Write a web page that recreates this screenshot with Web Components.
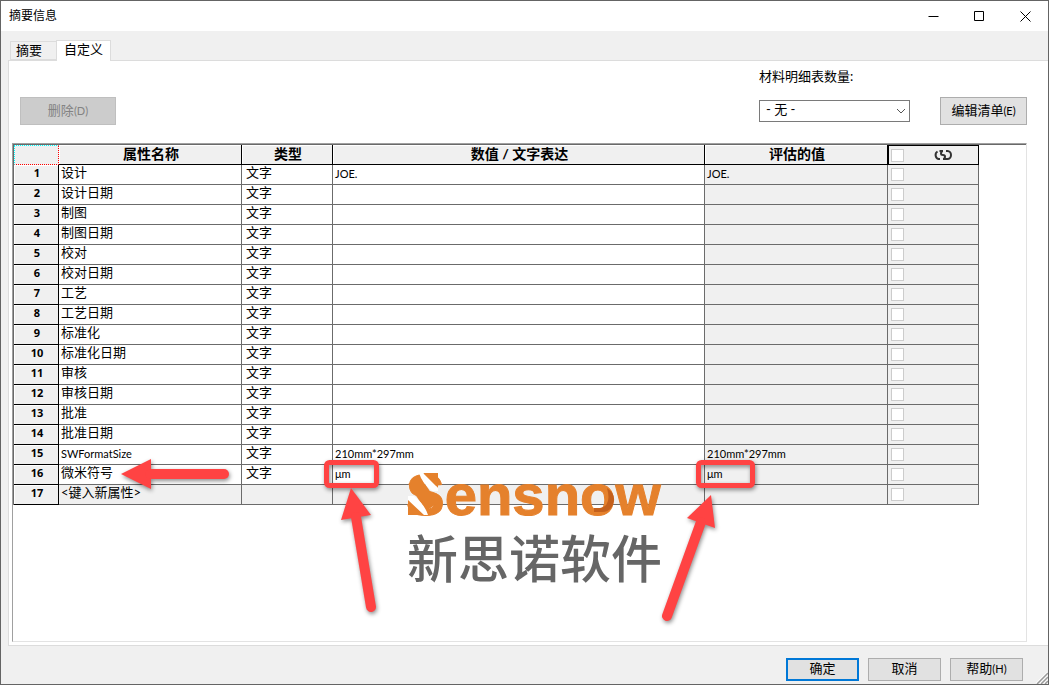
<!DOCTYPE html>
<html lang="zh-CN">
<head>
<meta charset="utf-8">
<title>摘要信息</title>
<style>
    html, body {
        margin: 0;
        height: 100%;
    }
    body {
        font-family: Lato, 'Noto Sans CJK SC', sans-serif;
        font-size: 13px;
        line-height: 20px;
        color: #000;
    }
</style>
</head>
<body>
<summary-dialog>
    <title-bar slot="title">摘要信息</title-bar>
    <tab-strip slot="tabs"></tab-strip>
    <tool-row slot="tools"></tool-row>
    <property-grid slot="grid"></property-grid>
    <push-button slot="footer" primary>确定</push-button>
    <push-button slot="footer">取消</push-button>
    <push-button slot="footer" key="H">帮助</push-button>
</summary-dialog>

<script>
class SummaryDialog extends HTMLElement {
    constructor() {
        super();
        this.attachShadow({ mode: 'open' });
        this.shadowRoot.innerHTML = `
        <style>
            :host {
                display: flex;
                flex-direction: column;
                box-sizing: border-box;
                min-height: 100%;
                border: 1px solid #646464;
                background: #f0f0f0;
            }
            .tabs {
                padding: 9px 0 0 9px;
            }
            .panel {
                flex: 1;
                display: flex;
                flex-direction: column;
                margin-left: 7px;
                padding: 5px 21px 3px 3px;
                border: 1px solid #dcdcdc;
                border-right: none;
                background: #fff;
            }
            .grid {
                flex: 1;
                display: flex;
                flex-direction: column;
            }
            footer {
                position: relative;
                display: flex;
                justify-content: flex-end;
                gap: 9px;
                padding: 12px 25px 3px;
            }
            .grip {
                position: absolute;
                right: 0;
                bottom: 0;
            }
        </style>
        <slot name="title"></slot>
        <div class="tabs"><slot name="tabs"></slot></div>
        <main class="panel">
            <slot name="tools"></slot>
            <div class="grid"><slot name="grid"></slot></div>
        </main>
        <footer>
            <slot name="footer"></slot>
            <svg class="grip" width="12" height="12" viewBox="0 0 12 12" stroke-width="1.5">
                <path stroke="#fff" d="M0 11.500L12 0M4 11.500L12 4M8 11.500L12 8"/>
                <path stroke="#9a9a9a" d="M1 12L12 1M5 12L12 5M9 12L12 9"/>
            </svg>
        </footer>
        `;
    }
}

class TitleBar extends HTMLElement {
    constructor() {
        super();
        this.attachShadow({ mode: 'open' });
        this.shadowRoot.innerHTML = `
        <style>
            :host {
                display: flex;
                align-items: center;
                justify-content: space-between;
                height: 30px;
                padding-left: 8px;
                background: #fff;
                font-size: 12px;
            }
            .buttons {
                display: flex;
            }
            button {
                display: flex;
                align-items: center;
                justify-content: center;
                width: 46px;
                height: 28px;
                padding: 0;
                border: none;
                background: none;
            }
            svg {
                fill: none;
                stroke: #000;
            }
        </style>
        <slot></slot>
        <div class="buttons">
            <button aria-label="最小化"><svg width="11" height="11"><path d="M.5 5.500h10"/></svg></button>
            <button aria-label="最大化"><svg width="11" height="11"><path d="M.5.5h9v9h-9z"/></svg></button>
            <button aria-label="关闭"><svg width="11" height="11"><path d="M.5.5l10 10M10.500.5l-10 10"/></svg></button>
        </div>
        `;
    }
}

class TabStrip extends HTMLElement {
    constructor() {
        super();
        this.attachShadow({ mode: 'open' });
        this.shadowRoot.innerHTML = `
        <style>
            :host {
                display: flex;
                align-items: flex-end;
                margin-bottom: -1px;
            }
            button {
                box-sizing: border-box;
                height: 19px;
                padding: 0 14px 0 5px;
                border: 1px solid #dcdcdc;
                border-right: none;
                background: #f0f0f0;
                font: inherit;
                line-height: 17px;
                margin-bottom: 1px;
            }
            button[aria-selected=true] {
                height: 21px;
                margin-bottom: 0;
                padding: 0 7px 4px;
                border-right: 1px solid #dcdcdc;
                border-bottom: none;
                background: #fff;
                position: relative;
            }
        </style>
        <button role="tab" aria-selected="false">摘要</button>
        <button role="tab" aria-selected="true">自定义</button>
        `;
        this.setAttribute('role', 'tablist');
    }
}

class PushButton extends HTMLElement {
    constructor() {
        super();
        this.attachShadow({ mode: 'open' });
    }
    connectedCallback() {
        const key = this.getAttribute('key');
        this.shadowRoot.innerHTML = `
        <style>
            :host {
                display: block;
                width: 73px;
                height: 23px;
            }
            :host([size=delete]) {
                width: 96px;
                height: 28px;
            }
            :host([size=edit]) {
                width: 87px;
                height: 28px;
            }
            button {
                width: 100%;
                height: 100%;
                padding: 0 0 2px;
                border: 1px solid #adadad;
                background: #e1e1e1;
                color: #000;
                font: inherit;
                line-height: 17px;
            }
            button:disabled {
                border-color: #bfbfbf;
                background: #ccc;
                color: #838383;
            }
            :host([primary]) button {
                border: 2px solid #0078d7;
            }
            small {
                font-size: 11px;
            }
        </style>
        <button ${this.hasAttribute('disabled') ? 'disabled' : ''}><slot></slot>${key ? `<small>(${key})</small>` : ''}</button>
        `;
    }
}

class ToolRow extends HTMLElement {
    constructor() {
        super();
        this.attachShadow({ mode: 'open' });
        this.shadowRoot.innerHTML = `
        <style>
            :host {
                display: flex;
                align-items: flex-end;
                padding: 0 0 18px 8px;
            }
            .bom {
                display: flex;
                flex-direction: column;
                gap: 14px;
                margin: 0 30px 3px auto;
            }
            .pick {
                display: grid;
                grid-template-rows: 22px;
                align-items: center;
                width: 151px;
            }
            .pick > * {
                grid-area: 1 / 1;
            }
            select {
                box-sizing: border-box;
                width: 100%;
                height: 22px;
                padding: 0 0 3px 6px;
                border: 1px solid #7a7a7a;
                border-radius: 0;
                background: #fff;
                appearance: none;
                color: #000;
                font: inherit;
                line-height: 17px;
            }
            svg {
                justify-self: end;
                margin-right: 4px;
                fill: none;
                stroke: #555;
                pointer-events: none;
            }
        </style>
        <push-button size="delete" key="D" disabled>删除</push-button>
        <div class="bom">
            <label for="quantity">材料明细表数量:</label>
            <div class="pick">
                <select id="quantity"><option>- 无 -</option></select>
                <svg width="10" height="6"><path d="M1 1l4 4 4-4"/></svg>
            </div>
        </div>
        <push-button size="edit" key="E">编辑清单</push-button>
        `;
    }
}

const properties = [
    ['设计', '文字', 'JOE.'],
    ['设计日期', '文字', ''],
    ['制图', '文字', ''],
    ['制图日期', '文字', ''],
    ['校对', '文字', ''],
    ['校对日期', '文字', ''],
    ['工艺', '文字', ''],
    ['工艺日期', '文字', ''],
    ['标准化', '文字', ''],
    ['标准化日期', '文字', ''],
    ['审核', '文字', ''],
    ['审核日期', '文字', ''],
    ['批准', '文字', ''],
    ['批准日期', '文字', ''],
    ['SWFormatSize', '文字', '210mm*297mm'],
    ['微米符号', '文字', 'μm'],
    ['&lt;键入新属性&gt;', '', '']
];

class PropertyGrid extends HTMLElement {
    constructor() {
        super();
        this.attachShadow({ mode: 'open' });
        const rows = properties.map(([name, type, value], i) => `
            <tr>
                <th scope="row">${i + 1}</th>
                <td class="${name.startsWith('SW') ? 'latin' : ''}">${name}</td>
                <td class="type">${type}</td>
                <td class="latin">${value}</td>
                <td class="latin locked">${value}</td>
                <td class="locked check"><input type="checkbox" aria-label="链接 ${i + 1}" disabled></td>
            </tr>`).join('');
        this.shadowRoot.innerHTML = `
        <style>
            :host {
                display: block;
                flex: 1;
                border: 1px solid #e3e3e3;
                border-top-color: #a0a0a0;
                border-left-color: #a0a0a0;
            }
            .inset {
                position: relative;
                box-sizing: border-box;
                height: 100%;
                border-top: 1px solid #696969;
                border-left: 1px solid #696969;
            }
            table {
                table-layout: fixed;
                width: 965px;
                border-spacing: 0;
            }
            th, td {
                box-sizing: border-box;
                height: 20px;
                padding: 0 2px;
                border: 0 solid #6b6b6b;
                border-width: 0 1px 1px 0;
                line-height: 15px;
                text-align: left;
                vertical-align: top;
                white-space: nowrap;
            }
            th {
                padding-left: 4px;
                border-color: #000;
                background: #f0f0f0;
                box-shadow: inset 1px 1px #fff;
                text-align: center;
            }
            thead th {
                font-size: 14px;
                line-height: 17px;
            }
            tbody th {
                font: bold 11px/16px 'Noto Sans', sans-serif;
            }
            th.corner {
                border: 1px dotted #f00;
                border-top-color: #0ff;
                border-left-color: #0ff;
                box-shadow: none;
            }
            .type {
                padding-left: 4px;
            }
            .latin {
                font-size: 11px;
                line-height: 17px;
            }
            .locked, tr:last-child td {
                background: #f0f0f0;
            }
            .check {
                vertical-align: middle;
            }
            .link {
                padding: 0 2px;
                border-top: 1px solid #000;
                border-left: 1px solid #000;
                box-shadow: none;
                vertical-align: middle;
            }
            .link div {
                display: grid;
                grid-template-columns: 13px 1fr;
                align-items: center;
                justify-items: center;
            }
            .link svg {
                margin-left: 6px;
                fill: none;
                stroke: #333;
                stroke-width: 2;
            }
            input {
                display: block;
                box-sizing: border-box;
                width: 13px;
                height: 13px;
                margin: 0;
                border: 1px solid #ccc;
                background: #fff;
                appearance: none;
            }
            .check input {
                margin-left: 1px;
            }
            .marks {
                position: absolute;
                top: 0;
                left: 0;
                pointer-events: none;
            }
        </style>
        <div class="inset">
            <table>
                <colgroup>
                    <col style="width: 45px"><col style="width: 183px"><col style="width: 91px">
                    <col style="width: 372px"><col style="width: 183px"><col style="width: 91px">
                </colgroup>
                <thead>
                    <tr>
                        <th class="corner"></th>
                        <th scope="col">属性名称</th>
                        <th scope="col">类型</th>
                        <th scope="col">数值 / 文字表达</th>
                        <th scope="col">评估的值</th>
                        <th class="link"><div>
                            <input type="checkbox" aria-label="全部链接" disabled>
                            <svg width="20" height="12" viewBox="0 0 20 12">
                                <path d="M7 10H5.500a3.500 4 0 0 1-1-7.500M6.500 2H10M10 2q-2 0-2 2.500 0 1.500 2 1.500t2 1.500q0 2.500-2 2.500h4.500a3.500 4 0 0 0 0-8H13"/>
                            </svg>
                        </div></th>
                    </tr>
                </thead>
                <tbody>${rows}</tbody>
            </table>
            <review-marks class="marks"></review-marks>
        </div>
        `;
    }
}

class ReviewMarks extends HTMLElement {
    constructor() {
        super();
        this.attachShadow({ mode: 'open' });
        this.shadowRoot.innerHTML = `
        <style>
            :host {
                display: block;
            }
            svg {
                display: block;
            }
            .logo {
                fill: #e5812c;
                stroke: #e5812c;
                stroke-width: 1;
                font: bold 58px 'Liberation Sans', sans-serif;
            }
            .company {
                fill: #666;
                font: 500 51px 'Liberation Sans', 'Noto Sans CJK SC', sans-serif;
            }
            .slit {
                fill: #fff;
            }
            .red {
                fill: #ff4343;
                filter: drop-shadow(1px 2px 2px rgba(0, 0, 0, .45));
            }
            .line {
                fill: none;
                stroke: #ff4343;
            }
        </style>
        <svg width="965" height="490" viewBox="14 145 965 490">
            <text class="logo" x="406" y="515">Sensnow</text>
            <path fill="#e5812c" d="M423 473h15v15zM408 498v17h17z"/>
            <path stroke="#e5812c" stroke-width="14" d="M414 480l18 27"/>
            <path class="slit" d="M419 473h4l15 15v3h-6q-10-8-13-18zM408 496h6q11 9 14 19h-4l-16-15z"/>
            <path fill="#c4601c" d="M607 488q8 5 7 13-2 11-12 11h-8v-4h6q12-2 7-20z"/>
            <text class="company" x="407" y="578">新思诺软件</text>
            <g class="red">
                <path d="M121 474l30-15v30z"/>
                <path class="line" stroke-width="10" stroke-linecap="round" d="M150 474h74"/>
            </g>
            <g class="red">
                <path d="M351 488l20 27-30 5z"/>
                <path class="line" stroke-width="10" stroke-linecap="round" d="M356 517l15 90"/>
                <rect class="line" stroke-width="5" x="326.500" y="462.500" width="50" height="23" rx="3"/>
            </g>
            <g class="red">
                <path d="M711 495l4 33-28-10z"/>
                <path class="line" stroke-width="10" stroke-linecap="round" d="M701 522l-34 94"/>
                <rect class="line" stroke-width="5" x="698.500" y="462.500" width="54" height="23" rx="3"/>
            </g>
        </svg>
        `;
    }
}

customElements.define('push-button', PushButton);
customElements.define('title-bar', TitleBar);
customElements.define('tab-strip', TabStrip);
customElements.define('tool-row', ToolRow);
customElements.define('review-marks', ReviewMarks);
customElements.define('property-grid', PropertyGrid);
customElements.define('summary-dialog', SummaryDialog);
</script>
</body>
</html>
